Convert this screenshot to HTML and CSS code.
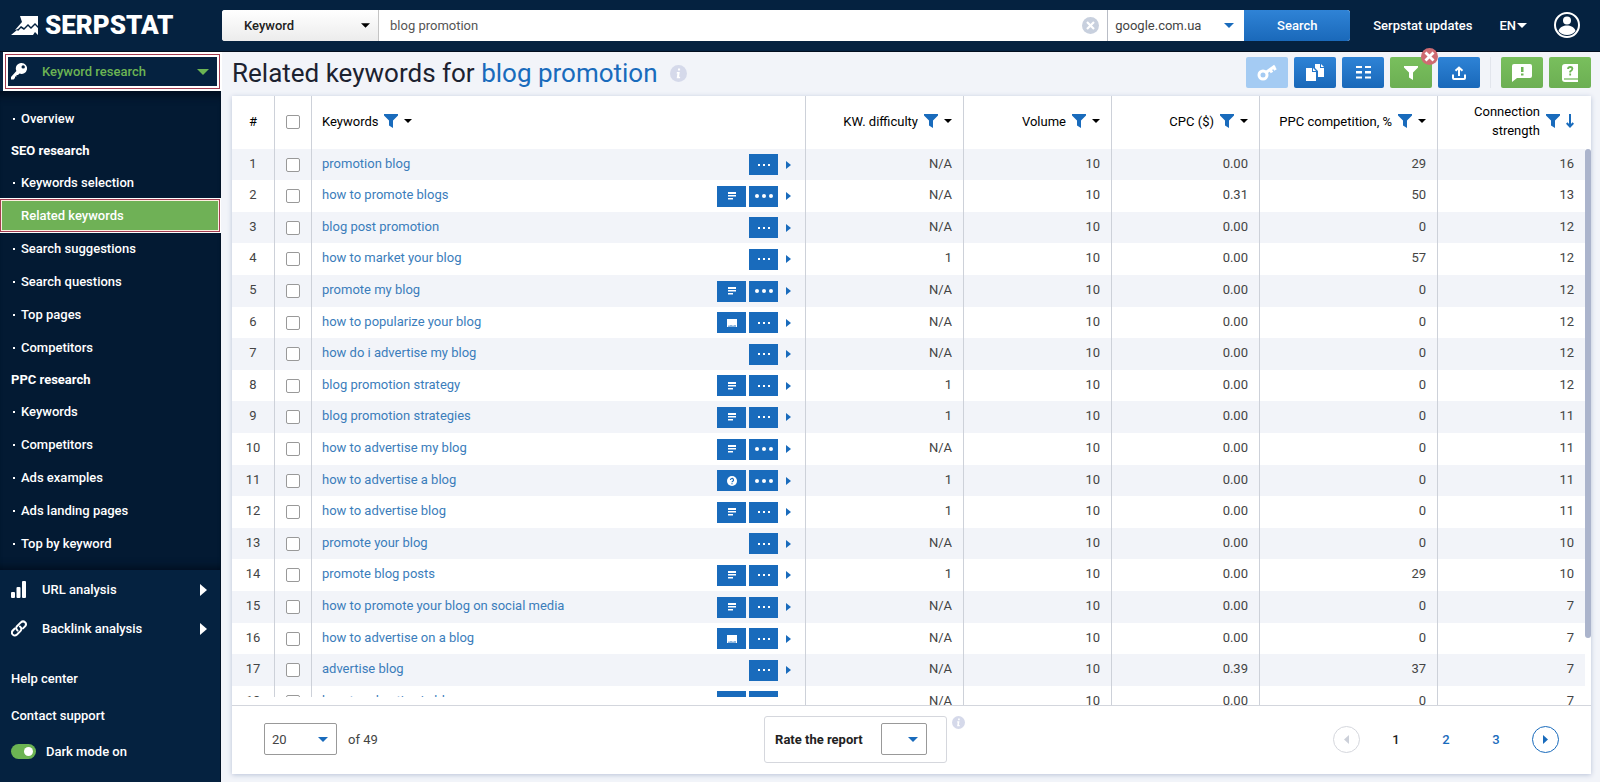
FILE: index.html
```html
<!DOCTYPE html>
<html lang="en">
<head>
<meta charset="utf-8">
<title>Related keywords – Serpstat</title>
<link rel="stylesheet" href="styles.css">
</head>
<body>
<svg class="sprite" aria-hidden="true">
  <symbol id="funnel" viewBox="0 0 14 14"><path d="M0 0h14v1.500L9 6.500V14l-4-2.500V6.500L0 1.500z"/></symbol>
  <symbol id="caret" viewBox="0 0 8 4"><path d="M0 0h8L4 4z"/></symbol>
  <symbol id="right" viewBox="0 0 5 8"><path d="M0 0l5 4-5 4z"/></symbol>
  <symbol id="lines" viewBox="0 0 10 8"><path d="M1 0h8v2H1zM1 3h8v1.500H1zM1 6h5v1.500H1z"/></symbol>
  <symbol id="small" viewBox="0 0 14 4"><path d="M1 1h2v2H1zM6 1h2v2H6zM11 1h2v2h-2z"/></symbol>
  <symbol id="big" viewBox="0 0 18 4"><circle cx="2" cy="2" r="2"/><circle cx="9" cy="2" r="2"/><circle cx="16" cy="2" r="2"/></symbol>
  <symbol id="pic" viewBox="0 0 10 8"><path d="M0 0h10v8H8.500V6H7.500v2h-1V6.500h-1V8h-1V6h-1v2H2.500V6.500h-1V8H0z"/></symbol>
  <symbol id="ask" viewBox="0 0 10 10"><circle cx="5" cy="5" r="5"/><path d="M3.500 4a1.500 1.500 0 1 1 2.300 1.200Q5 5.600 5 6.300M5 7.200v1" fill="none" stroke="#196bbc" stroke-width="1.200"/></symbol>
  <symbol id="info" viewBox="0 0 16 16"><circle cx="8" cy="8" r="8"/><path d="M7.500 3.200h2v2h-2zM6.500 6.500h2.700L8.500 11h1v1.500H6.300L7 8h-.8z" fill="#fff"/></symbol>
</svg>

<header class="topbar">
  <a class="logo" href="#" aria-label="Serpstat">
    <svg width="27" height="19" viewBox="0 0 27 19" fill="#fff"><path d="M9 0h18v10l-3-3-4 4-3-3-4 4-3-2-3 3-3 1 7-8z"/><path d="M0 19l6-5 1 1 3-3 3 2 4-4 3 3 4-4 3 3v7l-3-3-2 3z"/></svg>
    <span class="logo-name">SERPSTAT</span>
  </a>
  <form class="search">
    <span class="pick pick-type"><select aria-label="Search type"><option>Keyword</option></select><svg width="9" height="5"><use href="#caret"/></svg></span>
    <span class="query"><input type="text" value="blog promotion" aria-label="Query"><button type="button" class="clear" aria-label="Clear"><svg width="17" height="17" viewBox="0 0 17 17"><circle cx="8.500" cy="8.500" r="8.500" fill="#c8d0de"/><path d="M5 5l7 7M12 5l-7 7" stroke="#fff" stroke-width="2.200"/></svg></button></span>
    <span class="pick pick-base"><select aria-label="Database"><option>google.com.ua</option></select><svg width="10" height="5"><use href="#caret"/></svg></span>
    <button type="button" class="go">Search</button>
  </form>
  <nav class="account">
    <a href="#">Serpstat updates</a>
    <button type="button" class="lang">EN<svg width="10" height="5"><use href="#caret"/></svg></button>
    <button type="button" class="user" aria-label="Account"><svg width="26" height="26" viewBox="0 0 26 26"><circle cx="13" cy="13" r="12" fill="none" stroke="#fff" stroke-width="2"/><circle cx="13" cy="8.500" r="4" fill="#fff"/><path d="M4.500 19c1-4 5-5.500 8.500-5.500s7.500 1.500 8.500 5.500c-2 2.600-5 4-8.500 4s-6.500-1.400-8.500-4z" fill="#fff"/></svg></button>
  </nav>
</header>

<div class="layout">
  <aside class="sidebar">
    <button type="button" class="section section-open">
      <svg width="16" height="17" viewBox="0 0 16 17"><path fill="#fff" fill-rule="evenodd" d="M10.500 0a5.500 5.500 0 1 1-2 10.600L7 12H5.500v1.500H4V15l-1.500 1.500H0V14l5.400-6A5.500 5.500 0 0 1 10.500 0zm1.700 2.200a1.700 1.700 0 1 0 0 3.400 1.700 1.700 0 0 0 0-3.400z"/></svg>
      <span>Keyword research</span>
      <svg class="end" width="12" height="6"><use href="#caret"/></svg>
    </button>
    <ul class="submenu">
      <li><a href="#">Overview</a></li>
      <li class="group">SEO research</li>
      <li><a href="#">Keywords selection</a></li>
      <li class="current"><a href="#">Related keywords</a></li>
      <li><a href="#">Search suggestions</a></li>
      <li><a href="#">Search questions</a></li>
      <li><a href="#">Top pages</a></li>
      <li><a href="#">Competitors</a></li>
      <li class="group">PPC research</li>
      <li><a href="#">Keywords</a></li>
      <li><a href="#">Competitors</a></li>
      <li><a href="#">Ads examples</a></li>
      <li><a href="#">Ads landing pages</a></li>
      <li><a href="#">Top by keyword</a></li>
    </ul>
    <button type="button" class="section">
      <svg width="16" height="17" viewBox="0 0 16 17" fill="#fff"><rect y="11" width="4" height="6" rx="1"/><rect x="5.500" y="6" width="4" height="11" rx="1"/><rect x="11" width="4" height="17" rx="1"/></svg>
      <span>URL analysis</span>
      <svg class="end" width="7" height="12" viewBox="0 0 7 12"><path d="M0 0l7 6-7 6z"/></svg>
    </button>
    <button type="button" class="section">
      <svg width="16" height="17" viewBox="0 0 16 17" fill="none" stroke="#fff" stroke-width="2" stroke-linecap="round"><path d="M6.500 10.500C4.800 9 5 7.300 6 6.200L9.800 2.400c3-2.700 6.800 1 4.200 4l-2 2"/><path d="M9 6.500c1.800 1.500 1.600 3.300.6 4.400L6 14.500c-3 2.700-6.800-1-4.200-4l2-2"/></svg>
      <span>Backlink analysis</span>
      <svg class="end" width="7" height="12" viewBox="0 0 7 12"><path d="M0 0l7 6-7 6z"/></svg>
    </button>
    <div class="side-links">
      <a href="#">Help center</a>
      <a href="#">Contact support</a>
      <label><input type="checkbox" class="switch" checked>Dark mode on</label>
    </div>
  </aside>

  <main class="main">
    <div class="heading">
      <h1>Related keywords for <b>blog promotion</b></h1>
      <svg class="hint" width="17" height="17"><use href="#info"/></svg>
      <div class="tools">
        <button type="button" class="tool tool-off" aria-label="Key"><svg width="20" height="17" viewBox="0 0 20 17" fill="none" stroke="#fff"><circle cx="6" cy="11" r="4" stroke-width="3"/><path d="M9 8.500L18 2M13 5.500l2 3M16.500 3l2 3" stroke-width="3"/></svg></button>
        <button type="button" class="tool" aria-label="Copy"><svg width="18" height="17" viewBox="0 0 18 17" fill="#fff"><path d="M9 0h5v4h4v9h-6V7L9 4z"/><path d="M15 0l3 3h-3z"/><path d="M0 4h6v4h4v9H0z"/><path d="M7 4l3 3H7z"/></svg></button>
        <button type="button" class="tool" aria-label="Columns"><svg width="15" height="13" viewBox="0 0 15 13" fill="#fff"><path d="M0 0h6v2H0zM0 5h6v2.500H0zM0 10.500h6v2H0zM9 0h6v2H9zM9 5h6v2.500H9zM9 10.500h6v2H9z"/></svg></button>
        <span class="badge-host"><button type="button" class="tool tool-green" aria-label="Filter"><svg width="14" height="14"><use href="#funnel"/></svg></button><button type="button" class="badge" aria-label="Remove filter"><svg width="17" height="17" viewBox="0 0 17 17"><circle cx="8.500" cy="8.500" r="8.500" fill="#cf6b72"/><path d="M4.500 4.500l8 8M12.500 4.500l-8 8" stroke="#fff" stroke-width="2.800"/></svg></button></span>
        <button type="button" class="tool" aria-label="Export"><svg width="14" height="14" viewBox="0 0 14 14" fill="none" stroke="#fff" stroke-width="2"><path d="M7 10V2M3.500 4.800L7 1.500l3.500 3.300M1 8.500V12q0 1 1 1h10q1 0 1-1V8.500"/></svg></button>
        <span class="rule"></span>
        <button type="button" class="tool tool-green" aria-label="Feedback"><svg width="20" height="18" viewBox="0 0 20 18"><path d="M2 0h16q2 0 2 2v10q0 2-2 2H5l-5 4V2q0-2 2-2z" fill="#fff"/><path d="M9 3h2.500v5H9zM9 9.500h2.500v2H9z" fill="#6cb453"/></svg></button>
        <button type="button" class="tool tool-green" aria-label="Guide"><svg width="16" height="18" viewBox="0 0 16 18"><path d="M3 0h13v18H3q-3 0-3-3V3q0-3 3-3z" fill="#fff"/><path d="M2 15h14" stroke="#6cb453" stroke-width="1.200"/><path d="M6 5q.2-2 2.200-2t2.200 1.700Q10.400 6 8.200 7.500v1M8.200 9.500v2" fill="none" stroke="#6cb453" stroke-width="1.800"/></svg></button>
      </div>
    </div>

    <section class="card">
      <div class="grid-view">
        <table>
          <colgroup><col class="c-num"><col class="c-check"><col><col class="c-diff"><col class="c-vol"><col class="c-vol"><col class="c-ppc"><col class="c-conn"></colgroup>
          <thead><tr>
            <th>#</th>
            <th><input type="checkbox" aria-label="Select all"></th>
            <th><div class="head head-left">Keywords <svg class="fn"><use href="#funnel"/></svg><svg class="ct"><use href="#caret"/></svg></div></th>
            <th><div class="head">KW. difficulty <svg class="fn"><use href="#funnel"/></svg><svg class="ct"><use href="#caret"/></svg></div></th>
            <th><div class="head">Volume <svg class="fn"><use href="#funnel"/></svg><svg class="ct"><use href="#caret"/></svg></div></th>
            <th><div class="head">CPC ($) <svg class="fn"><use href="#funnel"/></svg><svg class="ct"><use href="#caret"/></svg></div></th>
            <th><div class="head">PPC competition, % <svg class="fn"><use href="#funnel"/></svg><svg class="ct"><use href="#caret"/></svg></div></th>
            <th><div class="head">Connection<br>strength <svg class="fn"><use href="#funnel"/></svg><svg class="down" viewBox="0 0 8 14"><path d="M4 0v12M.7 9L4 12.500 7.300 9" fill="none" stroke="#196bbc" stroke-width="2"/></svg></div></th>
          </tr></thead>
          <tbody>
            <tr><td>1</td><td><input type="checkbox" aria-label="Row 1"></td><td><div class="kw"><a href="#">promotion blog</a><i><svg class="w14"><use href="#small"/></svg></i><svg class="go-row"><use href="#right"/></svg></div></td><td>N/A</td><td>10</td><td>0.00</td><td>29</td><td>16</td></tr>
            <tr><td>2</td><td><input type="checkbox" aria-label="Row 2"></td><td><div class="kw"><a href="#">how to promote blogs</a><i><svg class="w10"><use href="#lines"/></svg></i><i><svg class="w18"><use href="#big"/></svg></i><svg class="go-row"><use href="#right"/></svg></div></td><td>N/A</td><td>10</td><td>0.31</td><td>50</td><td>13</td></tr>
            <tr><td>3</td><td><input type="checkbox" aria-label="Row 3"></td><td><div class="kw"><a href="#">blog post promotion</a><i><svg class="w14"><use href="#small"/></svg></i><svg class="go-row"><use href="#right"/></svg></div></td><td>N/A</td><td>10</td><td>0.00</td><td>0</td><td>12</td></tr>
            <tr><td>4</td><td><input type="checkbox" aria-label="Row 4"></td><td><div class="kw"><a href="#">how to market your blog</a><i><svg class="w14"><use href="#small"/></svg></i><svg class="go-row"><use href="#right"/></svg></div></td><td>1</td><td>10</td><td>0.00</td><td>57</td><td>12</td></tr>
            <tr><td>5</td><td><input type="checkbox" aria-label="Row 5"></td><td><div class="kw"><a href="#">promote my blog</a><i><svg class="w10"><use href="#lines"/></svg></i><i><svg class="w18"><use href="#big"/></svg></i><svg class="go-row"><use href="#right"/></svg></div></td><td>N/A</td><td>10</td><td>0.00</td><td>0</td><td>12</td></tr>
            <tr><td>6</td><td><input type="checkbox" aria-label="Row 6"></td><td><div class="kw"><a href="#">how to popularize your blog</a><i><svg class="w10"><use href="#pic"/></svg></i><i><svg class="w14"><use href="#small"/></svg></i><svg class="go-row"><use href="#right"/></svg></div></td><td>N/A</td><td>10</td><td>0.00</td><td>0</td><td>12</td></tr>
            <tr><td>7</td><td><input type="checkbox" aria-label="Row 7"></td><td><div class="kw"><a href="#">how do i advertise my blog</a><i><svg class="w14"><use href="#small"/></svg></i><svg class="go-row"><use href="#right"/></svg></div></td><td>N/A</td><td>10</td><td>0.00</td><td>0</td><td>12</td></tr>
            <tr><td>8</td><td><input type="checkbox" aria-label="Row 8"></td><td><div class="kw"><a href="#">blog promotion strategy</a><i><svg class="w10"><use href="#lines"/></svg></i><i><svg class="w14"><use href="#small"/></svg></i><svg class="go-row"><use href="#right"/></svg></div></td><td>1</td><td>10</td><td>0.00</td><td>0</td><td>12</td></tr>
            <tr><td>9</td><td><input type="checkbox" aria-label="Row 9"></td><td><div class="kw"><a href="#">blog promotion strategies</a><i><svg class="w10"><use href="#lines"/></svg></i><i><svg class="w14"><use href="#small"/></svg></i><svg class="go-row"><use href="#right"/></svg></div></td><td>1</td><td>10</td><td>0.00</td><td>0</td><td>11</td></tr>
            <tr><td>10</td><td><input type="checkbox" aria-label="Row 10"></td><td><div class="kw"><a href="#">how to advertise my blog</a><i><svg class="w10"><use href="#lines"/></svg></i><i><svg class="w18"><use href="#big"/></svg></i><svg class="go-row"><use href="#right"/></svg></div></td><td>N/A</td><td>10</td><td>0.00</td><td>0</td><td>11</td></tr>
            <tr><td>11</td><td><input type="checkbox" aria-label="Row 11"></td><td><div class="kw"><a href="#">how to advertise a blog</a><i><svg class="w10 h10"><use href="#ask"/></svg></i><i><svg class="w18"><use href="#big"/></svg></i><svg class="go-row"><use href="#right"/></svg></div></td><td>1</td><td>10</td><td>0.00</td><td>0</td><td>11</td></tr>
            <tr><td>12</td><td><input type="checkbox" aria-label="Row 12"></td><td><div class="kw"><a href="#">how to advertise blog</a><i><svg class="w10"><use href="#lines"/></svg></i><i><svg class="w14"><use href="#small"/></svg></i><svg class="go-row"><use href="#right"/></svg></div></td><td>1</td><td>10</td><td>0.00</td><td>0</td><td>11</td></tr>
            <tr><td>13</td><td><input type="checkbox" aria-label="Row 13"></td><td><div class="kw"><a href="#">promote your blog</a><i><svg class="w14"><use href="#small"/></svg></i><svg class="go-row"><use href="#right"/></svg></div></td><td>N/A</td><td>10</td><td>0.00</td><td>0</td><td>10</td></tr>
            <tr><td>14</td><td><input type="checkbox" aria-label="Row 14"></td><td><div class="kw"><a href="#">promote blog posts</a><i><svg class="w10"><use href="#lines"/></svg></i><i><svg class="w14"><use href="#small"/></svg></i><svg class="go-row"><use href="#right"/></svg></div></td><td>1</td><td>10</td><td>0.00</td><td>29</td><td>10</td></tr>
            <tr><td>15</td><td><input type="checkbox" aria-label="Row 15"></td><td><div class="kw"><a href="#">how to promote your blog on social media</a><i><svg class="w10"><use href="#lines"/></svg></i><i><svg class="w14"><use href="#small"/></svg></i><svg class="go-row"><use href="#right"/></svg></div></td><td>N/A</td><td>10</td><td>0.00</td><td>0</td><td>7</td></tr>
            <tr><td>16</td><td><input type="checkbox" aria-label="Row 16"></td><td><div class="kw"><a href="#">how to advertise on a blog</a><i><svg class="w10"><use href="#pic"/></svg></i><i><svg class="w14"><use href="#small"/></svg></i><svg class="go-row"><use href="#right"/></svg></div></td><td>N/A</td><td>10</td><td>0.00</td><td>0</td><td>7</td></tr>
            <tr><td>17</td><td><input type="checkbox" aria-label="Row 17"></td><td><div class="kw"><a href="#">advertise blog</a><i><svg class="w14"><use href="#small"/></svg></i><svg class="go-row"><use href="#right"/></svg></div></td><td>N/A</td><td>10</td><td>0.39</td><td>37</td><td>7</td></tr>
            <tr><td>18</td><td><input type="checkbox" aria-label="Row 18"></td><td><div class="kw"><a href="#">how to advertise in blog</a><i><svg class="w10"><use href="#lines"/></svg></i><i><svg class="w14"><use href="#small"/></svg></i><svg class="go-row"><use href="#right"/></svg></div></td><td>N/A</td><td>10</td><td>0.00</td><td>0</td><td>7</td></tr>
          </tbody>
        </table>
        <div class="frozen-edge"></div>
        <div class="scroll"><div class="thumb"></div></div>
      </div>
      <footer class="pager">
        <div class="per-page">
          <span class="pick boxed"><select aria-label="Rows per page"><option>20</option></select><svg width="10" height="5"><use href="#caret"/></svg></span>
          <span>of 49</span>
        </div>
        <div class="rate">
          <div class="rate-box"><label for="rate">Rate the report</label><span class="pick boxed narrow"><select id="rate"><option></option></select><svg width="10" height="5"><use href="#caret"/></svg></span></div>
          <svg class="hint" width="13" height="13"><use href="#info"/></svg>
        </div>
        <nav class="pages" aria-label="Pages">
          <button type="button" class="step" disabled aria-label="Previous"><svg width="5" height="9" viewBox="0 0 5 9"><path d="M5 0v9L0 4.500z"/></svg></button>
          <a class="page here" href="#">1</a>
          <a class="page" href="#">2</a>
          <a class="page" href="#">3</a>
          <button type="button" class="step" aria-label="Next"><svg width="5" height="9" viewBox="0 0 5 9"><path d="M0 0l5 4.500L0 9z"/></svg></button>
        </nav>
      </footer>
    </section>
  </main>
</div>
</body>
</html>
```

FILE: styles.css
```css
* { box-sizing: border-box; }
body {
  margin: 0;
  height: 100vh;
  display: flex;
  flex-direction: column;
  overflow: hidden;
  background: #f2f4f9;
  color: #444;
  fill: currentColor;
  font: 13px/19px Roboto, "Liberation Sans", sans-serif;
}
button, input, select { font: inherit; color: inherit; margin: 0; }
button { border: 0; padding: 0; background: none; cursor: pointer; }
a { color: inherit; text-decoration: none; }
svg { display: block; flex: none; }
.sprite { position: absolute; width: 0; height: 0; }

/* Top bar */
.topbar {
  flex: none;
  height: 52px;
  display: flex;
  align-items: center;
  padding: 0 20px 1px 0;
  background: #052240;
  border-bottom: 1px solid #020f20;
  color: #fff;
}
.logo { width: 222px; padding-left: 11px; display: flex; align-items: center; gap: 7px; }
.logo-name { font-size: 26px; font-weight: 900; line-height: 30px; }
.search {
  flex: 1;
  display: flex;
  height: 31px;
  border-radius: 3px;
  overflow: hidden;
  background: #fff;
}
.pick { position: relative; display: flex; }
.pick select {
  appearance: none;
  width: 100%;
  border: 0;
  outline: 0;
  background: none;
}
.pick svg { position: absolute; right: 10px; top: 50%; margin-top: -2px; pointer-events: none; color: #196bbc; }
.pick-type { width: 157px; background: linear-gradient(#fff, #ececec); border-right: 1px solid #c4c4c4; color: #222; }
.pick-type select { padding-left: 22px; font-weight: 500; }
.pick-type svg { right: 8px; color: #000; }
.query { flex: 1; display: flex; align-items: center; padding: 0 8px 0 11px; border-right: 1px solid #b9bdc6; }
.query input { flex: 1; min-width: 0; padding: 0; border: 0; outline: 0; background: none; color: #555; }
.pick-base { width: 136px; color: #444; }
.pick-base select { padding-left: 7px; }
.go { width: 106px; background: linear-gradient(#2f83d6, #1a69ba); color: #fff; font-weight: 500; }
.account { display: flex; align-items: center; font-weight: 500; padding-left: 23px; }
.lang { display: flex; align-items: center; gap: 1px; margin: 0 27px; font-weight: 500; }

/* Sidebar */
.layout { flex: 1; min-height: 0; display: flex; }
.sidebar {
  width: 221px;
  flex: none;
  display: flex;
  flex-direction: column;
  background: #052240;
  border-right: 1px solid #021226;
  color: #fff;
  font-weight: 500;
}
.section {
  display: flex;
  align-items: center;
  gap: 15px;
  height: 39px;
  padding: 0 13px 0 11px;
  font-weight: 500;
  text-align: left;
}
.section .end { margin-left: auto; }
.section-open {
  height: 35px;
  margin: 2px 0 2px 5px;
  padding: 0 10px 0 5px;
  border: 1px solid #a33c50;
  box-shadow: inset 0 0 0 2px #fff, 0 0 0 2px #fff;
  color: #6cb453;
}
.submenu {
  list-style: none;
  margin: 0;
  padding: 11px 0 10px;
  background: #031a33;
  box-shadow: inset 0 12px 10px -8px #010c1c, inset 0 -12px 10px -10px #010c1c;
}
.submenu li { height: 33px; line-height: 33px; padding-left: 21px; }
.submenu li::before { content: ""; float: left; width: 2px; height: 2px; margin: 16px 0 0 -8px; background: #fff; }
.submenu .group { height: 31px; line-height: 31px; padding-left: 11px; font-weight: 700; }
.submenu .group::before, .submenu .current::before { display: none; }
.submenu .current {
  line-height: 31px;
  padding-left: 20px;
  border: 1px solid #a33c50;
  background: #6fb156;
  box-shadow: inset 0 0 0 1px #fdeee0, 0 0 0 1px #fff;
}
.side-links { display: flex; flex-direction: column; padding: 12px 11px 0; }
.side-links > * { display: flex; align-items: center; gap: 10px; height: 36px; }
.side-links > :first-child { height: 37px; }
.switch {
  appearance: none;
  width: 25px;
  height: 15px;
  padding: 3px;
  border-radius: 8px;
  background: #6cb453;
}
.switch::before { content: ""; display: block; width: 9px; height: 9px; margin-left: 10px; border-radius: 50%; background: #fff; }

/* Page heading */
.main { flex: 1; min-width: 0; display: flex; flex-direction: column; padding: 0 9px 8px 11px; }
.heading { display: flex; align-items: center; height: 44px; padding-bottom: 3px; }
h1 { margin: 0; font-size: 26px; line-height: 32px; font-weight: 400; color: #1c2230; }
h1 b { font-weight: 400; color: #196bbc; }
.hint { color: #d5d9ea; }
.heading .hint { margin: 2px 0 0 12px; }
.tools { display: flex; align-items: center; gap: 6px; margin-left: auto; }
.tool {
  width: 42px;
  height: 31px;
  display: grid;
  place-items: center;
  border-radius: 2px;
  background: linear-gradient(#2e83d6, #1968b9);
  color: #fff;
}
.tool-off { background: #a4cbf3; }
.tool-green { background: linear-gradient(#79bf5d, #6caf53); }
.badge-host { position: relative; }
.badge { position: absolute; right: -6px; top: -9px; }
.rule { width: 1px; height: 31px; margin: 0 4px; background: #e2e5ec; }

/* Report card */
.card {
  flex: 1;
  min-height: 0;
  display: flex;
  flex-direction: column;
  background: #fff;
  box-shadow: 0 1px 5px #b9c3d8;
}
.grid-view { position: relative; flex: 1; min-height: 0; overflow: hidden; border-bottom: 1px solid #d3d6dd; }
table { width: 100%; border-collapse: separate; border-spacing: 0; table-layout: fixed; }
.c-num { width: 43px; }
.c-check { width: 37px; }
.c-diff { width: 158px; }
.c-vol { width: 148px; }
.c-ppc { width: 178px; }
.c-conn { width: 153px; }
th, td { padding: 0 11px 0 10px; border-right: 1px solid #cdd1d9; text-align: right; }
th { height: 53px; padding-bottom: 3px; font-weight: 400; color: #000; }
td { height: 32px; line-height: 18px; padding-bottom: 2px; }
tr > :nth-child(-n+2) { padding-left: 0; padding-right: 0; text-align: center; }
tr > :nth-child(8) { padding-right: 17px; border-right: 0; }
tbody tr:nth-child(odd) { background: #f2f4f9; }
tbody tr:nth-child(5n+1) td, tbody tr:nth-child(5n+3) td { height: 31px; }
.head { display: flex; align-items: center; justify-content: flex-end; gap: 6px; }
.head-left { justify-content: flex-start; }
.fn { width: 14px; height: 14px; color: #196bbc; }
.ct { width: 8px; height: 4px; color: #000; }
.down { width: 8px; height: 14px; }
table input {
  appearance: none;
  display: block;
  width: 14px;
  height: 14px;
  margin: 2px auto 0;
  border: 1px solid #999;
  border-radius: 2px;
  background: #fff;
}
.kw { display: flex; align-items: center; gap: 3px; padding-right: 3px; }
.kw a { flex: 1; text-align: left; color: #3b7dbb; }
.kw i { display: grid; place-items: center; width: 29px; height: 21px; margin-top: 2px; background: #196bbc; color: #fff; }
.go-row { width: 5px; height: 8px; margin: 2px 0 0 5px; color: #196bbc; }
.w10 { width: 10px; height: 8px; }
.h10 { height: 10px; }
.w14 { width: 14px; height: 4px; }
.w18 { width: 18px; height: 4px; }
.frozen-edge { position: absolute; left: 0; right: 786px; bottom: 0; height: 8px; background: #fff; }
.scroll { position: absolute; top: 53px; right: 0; bottom: 0; width: 6px; background: #fff; }
.thumb { height: 88%; border-radius: 3px; background: #abb4cc; }

/* Pager */
.pager { flex: none; height: 68px; display: flex; align-items: center; justify-content: space-between; padding: 0 32px 2px; }
.per-page { display: flex; align-items: center; gap: 11px; }
.boxed { width: 73px; height: 32px; border: 1px solid #999; border-radius: 2px; }
.boxed select { padding-left: 7px; }
.boxed svg { right: 8px; }
.narrow { width: 46px; }
.rate { display: flex; align-items: flex-start; gap: 5px; margin-left: 18px; }
.rate-box {
  display: flex;
  align-items: center;
  gap: 18px;
  height: 47px;
  padding: 0 19px 0 10px;
  border: 1px solid #d5d7dd;
  border-radius: 3px;
  color: #222;
  font-weight: 700;
}
.pages { display: flex; align-items: center; }
.step {
  display: grid;
  place-items: center;
  width: 27px;
  height: 27px;
  border: 1px solid #196bbc;
  border-radius: 50%;
  color: #196bbc;
}
.step:disabled { border-color: #d5d7dd; color: #ccd0d9; }
.page { width: 50px; text-align: center; font-weight: 500; color: #196bbc; }
.page:nth-child(2) { margin-left: 11px; }
.page:nth-child(4) { margin-right: 11px; }
.page.here { color: #222; }
```
